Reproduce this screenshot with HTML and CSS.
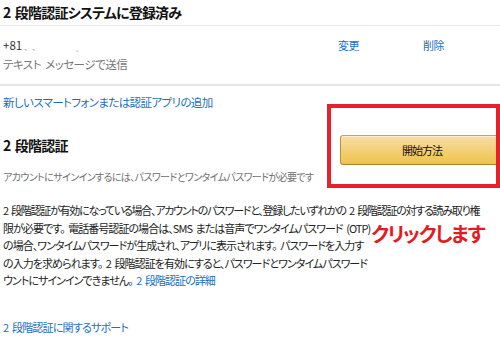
FILE: index.html
```html
<!DOCTYPE html>
<html lang="ja">
<head>
<meta charset="UTF-8">
<title>2 段階認証</title>
<link rel="stylesheet" href="styles.css">
</head>
<body>
<div id="page">
	<h2 class="title">2 段階認証システムに登録済み</h2>
	<div class="phone">
		<div class="phone-info">
			<div class="number">+81<span class="mask">、 、</span><span class="mask dot">ˎ</span></div>
			<div class="sub">テキスト メッセージで送信</div>
		</div>
		<a href="#" class="act">変更</a>
		<a href="#" class="act">削除</a>
	</div>
	<a href="#" class="add">新しいスマートフォンまたは認証アプリの追加</a>

	<div class="section">
		<div class="section-head">
			<h2 class="head">2 段階認証</h2>
			<p class="desc">アカウントにサインインするには、パスワードとワンタイムパスワードが必要です</p>
		</div>
		<div class="btn-wrap">
			<span class="frame"></span>
			<a href="#" class="btn">開始方法</a>
		</div>
	</div>

	<div class="para">
		<span class="line tight">2 段階認証が有効になっている場合、アカウントのパスワードと、登録したいずれかの 2 段階認証の対する読み取り権</span>
		<span class="line">限が必要です。 電話番号認証の場合は、SMS または音声でワンタイムパスワード (OTP)</span>
		<span class="line">の場合、ワンタイムパスワードが生成され、アプリに表示されます。 パスワードを入力す</span>
		<span class="line">の入力を求められます。 2 段階認証を有効にすると、パスワードとワンタイムパスワード</span>
		<span class="line">ウントにサインインできません。 <a href="#">2 段階認証の詳細</a></span>
		<span class="note">クリックします</span>
	</div>

	<a href="#" class="support">2 段階認証に関するサポート</a>
</div>
</body>
</html>
```

FILE: styles.css
```css
body {
	margin: 0;
	background: #fff;
	color: #222;
	font-family: "Noto Sans CJK JP", "Noto Sans", sans-serif;
	font-feature-settings: "palt";
	word-spacing: 2px;
}
a {
	color: #1a6fc1;
	text-decoration: none;
}
#page {
	width: 500px;
	height: 350px;
	overflow: hidden;
}
.title {
	margin: 0;
	padding-left: 3px;
	height: 25px;
	font-size: 14px;
	line-height: 25px;
	letter-spacing: -0.8px;
	color: #111;
	border-bottom: 1px solid #e8e8e8;
}
.phone {
	display: grid;
	grid-template-columns: 335px 85px auto;
	padding: 10px 0 11px 3px;
	border-bottom: 2px solid #e6e6e6;
}
.number {
	font-size: 11.5px;
	line-height: 18px;
	color: #333;
}
.mask {
	margin-left: 2px;
	font-size: 8px;
	color: #999;
}
.mask.dot {
	margin-left: 40px;
}
.sub {
	font-size: 11.5px;
	line-height: 17px;
	letter-spacing: -0.5px;
	color: #777;
}
.act {
	font-size: 11px;
	line-height: 18px;
	letter-spacing: -0.5px;
}
.add {
	display: block;
	margin-top: 7px;
	padding-left: 3px;
	font-size: 11.5px;
	line-height: 18px;
	letter-spacing: -0.6px;
}
.section {
	display: flex;
	align-items: flex-start;
	margin-top: 24px;
}
.section-head {
	flex: 1;
	padding-left: 3px;
}
.head {
	margin: 0;
	font-size: 14px;
	line-height: 20px;
	letter-spacing: -0.8px;
	color: #111;
}
.desc {
	margin: 14px 0 0;
	font-size: 10px;
	line-height: 16px;
	letter-spacing: -0.6px;
	white-space: nowrap;
	color: #707070;
}
.btn-wrap {
	position: relative;
	width: 160px;
}
.btn {
	display: block;
	width: 175px;
	height: 30px;
	box-sizing: border-box;
	border: 1px solid;
	border-color: #c9a44a #b8923a #a8822e;
	border-radius: 3px;
	background: linear-gradient(#f7dfa5, #f0c14b);
	box-shadow: inset 0 1px 0 rgba(255, 255, 255, .5);
	color: #111;
	font-size: 11px;
	line-height: 28px;
	letter-spacing: -1px;
	text-indent: 61px;
}
.frame {
	position: absolute;
	left: -13px;
	top: -31px;
	width: 173px;
	height: 84px;
	box-sizing: border-box;
	border: 4px solid #e8202b;
	z-index: 1;
}
.para {
	position: relative;
	margin-top: 17px;
	padding-left: 3px;
	font-size: 11px;
	line-height: 17.5px;
	letter-spacing: -0.95px;
	color: #222;
}
.line {
	display: block;
	white-space: nowrap;
}
.line.tight {
	letter-spacing: -1.25px;
}
.note {
	position: absolute;
	left: 371px;
	top: 19px;
	font-size: 20px;
	font-weight: bold;
	line-height: 26px;
	letter-spacing: -1.5px;
	white-space: nowrap;
	color: #e41b24;
}
.support {
	display: block;
	margin-top: 28px;
	padding-left: 3px;
	font-size: 11px;
	line-height: 18px;
	letter-spacing: -0.8px;
}
```
